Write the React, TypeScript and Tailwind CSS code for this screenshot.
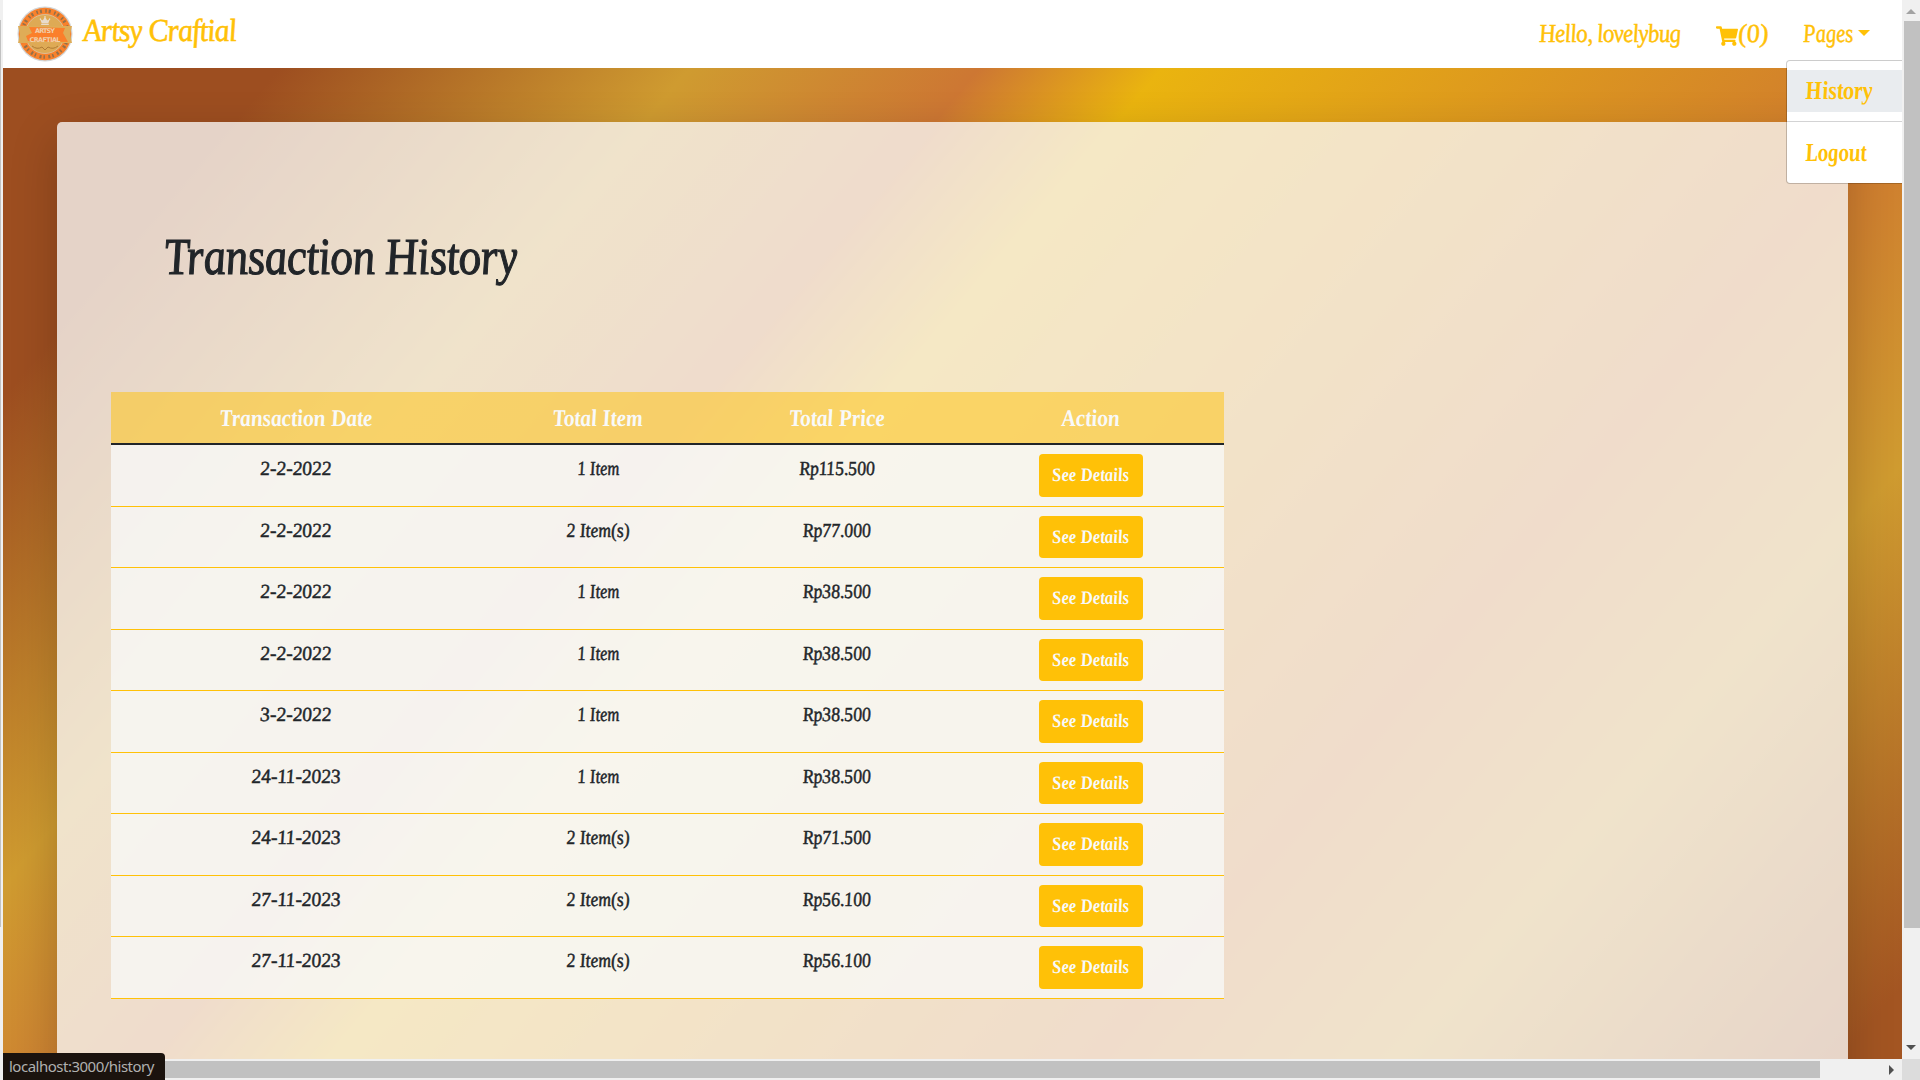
import type { ReactNode } from "react";
import { FaShoppingCart, FaCrown } from "react-icons/fa";

const rows = [
  ["2-2-2022", "1 Item", "Rp115.500"],
  ["2-2-2022", "2 Item(s)", "Rp77.000"],
  ["2-2-2022", "1 Item", "Rp38.500"],
  ["2-2-2022", "1 Item", "Rp38.500"],
  ["3-2-2022", "1 Item", "Rp38.500"],
  ["24-11-2023", "1 Item", "Rp38.500"],
  ["24-11-2023", "2 Item(s)", "Rp71.500"],
  ["27-11-2023", "2 Item(s)", "Rp56.100"],
  ["27-11-2023", "2 Item(s)", "Rp56.100"],
];

/* Condensed, slightly straightened italic lettering. */
function Script({ children, className = "" }: { children: ReactNode; className?: string }) {
  return <span className={`inline-block whitespace-nowrap skew-x-[6deg] ${className}`}>{children}</span>;
}

function Logo() {
  return (
    <svg viewBox="0 0 56 56" className="h-14 w-14 shrink-0">
      <circle cx="28" cy="28" r="27.5" fill="#d3d5d6" />
      <circle cx="28" cy="28" r="26.3" fill="#f8812c" />
      <circle cx="28" cy="28" r="23" fill="none" stroke="#93704a" strokeWidth="3.5" strokeDasharray="1.5 2 2 3.5" />
      <circle cx="28" cy="28" r="19.5" fill="#deaa55" stroke="#d8c7ac" strokeWidth="0.8" />
      <path d="M1 20h54l-2 8 2 9H1l2-9z" fill="#dfac57" />
      <path d="M12 21l36 1-2 5 5 9-40-1-2-5 6-3z" fill="#fb7f2b" />
      <g transform="translate(22.5 9)" color="#e8dccb"><FaCrown size={11} /></g>
      <text x="28" y="27" textAnchor="middle" fontSize="6.5" fontStyle="normal" fontFamily="DejaVu Sans" fontWeight="bold" fill="#f0cfaa" textLength="20">ARTSY</text>
      <text x="28" y="35.5" textAnchor="middle" fontSize="6.5" fontStyle="normal" fontFamily="DejaVu Sans" fontWeight="bold" fill="#f0cfaa" textLength="31">CRAFTIAL</text>
      <path d="M15 40q5 4 10 1l3 3 3-3q5 3 10-1" fill="none" stroke="#b07b35" />
    </svg>
  );
}

export default function App() {
  return (
    <div className="relative flex h-[1080px] w-[1920px] overflow-hidden bg-[#f0f0f0] font-['Liberation_Serif',serif] italic text-[#212529]">
      <div className="flex w-[3px] shrink-0 flex-col">
        <div className="h-5" />
        <div className="h-[907px] w-px bg-[#c1c1c1]" />
      </div>
      <div className="flex w-[1899px] shrink-0 flex-col">
        <header className="flex h-[68px] shrink-0 items-center bg-white text-[#ffc107] [-webkit-text-stroke:0.5px_#ffc107]">
          <div className="ml-[14px] flex w-[240px] items-center [-webkit-text-stroke:0px]">
            <Logo />
            <Script className="-mt-2 ml-[10px] origin-left scale-x-[0.93] text-[32px] leading-10 tracking-[-0.9px] [-webkit-text-stroke:0.6px_#ffc107]">Artsy Craftial</Script>
          </div>
          <nav className="ml-auto flex items-center whitespace-nowrap text-[26px] leading-10">
            <div className="w-[142px]"><Script className="origin-left scale-x-[0.88] tracking-[-0.7px]">Hello, lovelybug</Script></div>
            <div className="ml-[35px] flex w-[52px] items-center"><FaShoppingCart size={22} className="mt-[3px] shrink-0" /><Script>(0)</Script></div>
            <div className="ml-[35px] flex w-[99px] items-center">
              <div className="w-[55px]"><Script className="origin-left scale-x-[0.79]">Pages</Script></div>
              <i className="-mt-[2px] border-x-[6px] border-t-[6px] border-x-transparent border-t-[#ffc107]" />
            </div>
          </nav>
        </header>
        <main className="flex h-[991px] shrink-0 overflow-hidden bg-[linear-gradient(130deg,#9d4e20_0px,#9d4e20_212px,#cf9b30_526px,#cd7733_748px,#eab40f_888px,#cf7a2f_1475px,#cf9b30_1710px,#a35522_2045px)] px-[54px] pt-[54px]">
          <section className="flex h-[1300px] w-[1791px] flex-col rounded-[5px] bg-[#f8f5f3]/80 shadow-[0_16px_48px_rgba(0,0,0,0.2)]">
            <h1 className="ml-[107px] mt-[105px] h-[165px] text-[52px] font-medium leading-[60px] tracking-[-0.5px] [-webkit-text-stroke:1.1px_#212529]">
              <Script className="origin-left scale-x-[0.865]">Transaction History</Script>
            </h1>
            <table className="ml-[54px] w-[1113px] table-fixed border-separate border-spacing-0 text-center">
              <colgroup><col className="w-[370px]" /><col className="w-[234px]" /><col className="w-[243px]" /><col className="w-[266px]" /></colgroup>
              <thead>
                <tr className="bg-[#ffc107]/50 text-[24px] text-[#f8f9fa]">
                  {["Transaction Date", "Total Item", "Total Price", "Action"].map((h) => (
                    <th key={h} className="h-[53px] border-b-2 border-[#212529] p-0 font-bold"><Script className="scale-x-[0.89]">{h}</Script></th>
                  ))}
                </tr>
              </thead>
              <tbody>
                {rows.map((row, i) => (
                  <tr key={i} className={i % 2 ? "h-[61px] bg-[#f8f9fa]/75 text-[20px]" : "h-[62px] bg-[#f8f9fa]/75 text-[20px]"}>
                    {row.map((c, j) => (
                      <td key={j} className="border-b border-[#ffc107] p-0 pt-2 align-top leading-[30px] [-webkit-text-stroke:0.5px_#212529]">
                        <Script className={j === 0 ? "scale-x-[0.97]" : c === "1 Item" ? "scale-x-[0.83]" : "scale-x-[0.88]"}>{c}</Script>
                      </td>
                    ))}
                    <td className="border-b border-[#ffc107] p-0 pt-[9px] align-top">
                      <button className={i % 2 ? "block mx-auto h-[42px] w-[104px] rounded-[4px] bg-[#ffc107] text-[19px] font-bold italic text-[#f8f9fa]" : "block mx-auto h-[43px] w-[104px] rounded-[4px] bg-[#ffc107] text-[19px] font-bold italic text-[#f8f9fa]"}>
                        <Script className="scale-x-[0.885]">See Details</Script>
                      </button>
                    </td>
                  </tr>
                ))}
              </tbody>
            </table>
          </section>
        </main>
        <div className="flex h-[21px] shrink-0 items-center">
          <div className="h-[17px] w-[1817px] bg-[#c1c1c1]" />
          <i className="ml-[69px] border-y-[5px] border-l-[5px] border-y-transparent border-l-[#505050]" />
        </div>
      </div>
      <aside className="flex w-[18px] shrink-0 flex-col items-center">
        <i className="mt-[9px] border-x-[5px] border-b-[5px] border-x-transparent border-b-[#a3a3a3]" />
        <div className="ml-[2px] mt-[7px] h-[907px] w-4 bg-[#c1c1c1]" />
        <i className="mt-[117px] border-x-[5px] border-t-[5px] border-x-transparent border-t-[#505050]" />
        <div className="mt-auto h-[21px] w-full bg-[#dcdcdc]" />
      </aside>
      <div className="absolute left-[1786px] top-[60px] h-[124px] w-[116px] rounded-l-[4px] border border-r-0 border-black/20 bg-white bg-clip-padding pt-[9px] text-[26px] font-bold leading-[42px] text-[#ffc107]">
        <div className="h-[42px] bg-[#e9ecef] pl-[18px]"><Script className="origin-left scale-x-[0.85]">History</Script></div>
        <div className="mt-[9px] border-t border-[#d3d3d4] pl-[18px] pt-[10px]"><Script className="origin-left scale-x-[0.8]">Logout</Script></div>
      </div>
      <div className="absolute bottom-0 left-[3px] h-[27px] w-[162px] rounded-tr-[4px] bg-[#1b130e] pl-[6px] font-['Noto_Sans',sans-serif] text-[15px] not-italic leading-[27px] tracking-[-0.5px] text-[#b0b0b0]">localhost:3000/history</div>
    </div>
  );
}
